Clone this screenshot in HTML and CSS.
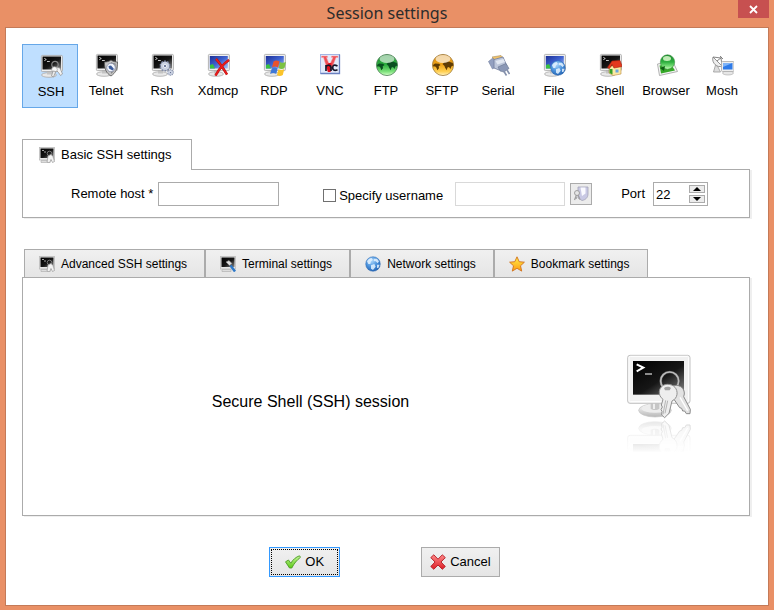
FILE: index.html
```html
<!DOCTYPE html>
<html lang="en">
<head>
    <meta charset="UTF-8">
    <meta name="viewport" content="width=device-width, initial-scale=1.0">
    <title>Session settings</title>
    <link rel="stylesheet" href="styles.css">
</head>
<body>
    <!-- shared icon parts -->
    <svg class="defs" aria-hidden="true">
        <defs>
            <linearGradient id="black" x1="0" y1="0" x2="1" y2="1">
                <stop offset="0" stop-color="#000"/><stop offset=".55" stop-color="#161616"/><stop offset="1" stop-color="#888"/>
            </linearGradient>
            <linearGradient id="blue" x1="0" y1="0" x2="1" y2="1">
                <stop offset="0" stop-color="#1c2f96"/><stop offset=".5" stop-color="#3f62d0"/><stop offset="1" stop-color="#a9c6f5"/>
            </linearGradient>
            <linearGradient id="metal" x1="0" y1="0" x2="0" y2="1">
                <stop offset="0" stop-color="#fff"/><stop offset="1" stop-color="#b8b8b8"/>
            </linearGradient>
            <linearGradient id="greenball" x1="0" y1="0" x2="0" y2="1">
                <stop offset="0" stop-color="#1c8a30"/><stop offset=".5" stop-color="#2fb040"/><stop offset=".8" stop-color="#7be07a"/><stop offset="1" stop-color="#d2ffc8"/>
            </linearGradient>
            <linearGradient id="goldball" x1="0" y1="0" x2="0" y2="1">
                <stop offset="0" stop-color="#d88a10"/><stop offset=".5" stop-color="#f0a418"/><stop offset=".8" stop-color="#ffcf50"/><stop offset="1" stop-color="#fff3c0"/>
            </linearGradient>
            <radialGradient id="blueball" cx=".4" cy=".3" r=".8">
                <stop offset="0" stop-color="#a8d4fa"/><stop offset=".5" stop-color="#4a92dc"/><stop offset="1" stop-color="#1c58a8"/>
            </radialGradient>
            <linearGradient id="check" x1="0" y1="0" x2="0" y2="1">
                <stop offset="0" stop-color="#c6f59a"/><stop offset="1" stop-color="#5ccb16"/>
            </linearGradient>
            <linearGradient id="red" x1="0" y1="0" x2="0" y2="1">
                <stop offset="0" stop-color="#ff8a8a"/><stop offset="1" stop-color="#dc1c24"/>
            </linearGradient>
            <linearGradient id="star" x1="0" y1="0" x2="0" y2="1">
                <stop offset="0" stop-color="#fff04a"/><stop offset="1" stop-color="#ff9a10"/>
            </linearGradient>
            <linearGradient id="fade" x1="0" y1="0" x2="0" y2="1">
                <stop offset=".5" stop-color="#000"/><stop offset="1" stop-color="#999"/>
            </linearGradient>
            <mask id="fademask" maskUnits="userSpaceOnUse" x="72" y="36" width="216" height="204">
                <rect x="72" y="36" width="216" height="204" fill="url(#fade)"/>
            </mask>
        </defs>
        <symbol id="monitor" viewBox="0 0 24 24">
            <ellipse cx="10" cy="21" rx="7.5" ry="2.3" fill="#e8e8e8" stroke="#a4a4a4" stroke-width=".7"/>
            <path d="M8 16h5v4.500H8z" fill="#c4c4c4"/>
            <rect x="2.400" y="1.400" width="21" height="16.200" rx="1" fill="#f0f0f0" stroke="#a2a2a2" stroke-width=".8"/>
        </symbol>
        <symbol id="term" viewBox="0 0 24 24">
            <use href="#monitor"/>
            <rect x="3.500" y="2.500" width="18.500" height="13" fill="url(#black)"/>
            <path d="M5.300 4.300l2 1.200-2 1.200M8 7.500h2.800" fill="none" stroke="#ddd" stroke-width=".9"/>
        </symbol>
        <symbol id="desk" viewBox="0 0 24 24">
            <use href="#monitor"/>
            <rect x="3.800" y="3" width="18" height="12.500" fill="url(#blue)"/>
            <path d="M4 12l3-1 2 4.500H4z" fill="#38c040"/>
        </symbol>
        <symbol id="ssh" viewBox="0 0 24 24">
            <use href="#term"/>
            <circle cx="16" cy="10.500" r="3.200" fill="none" stroke="#888" stroke-width="1.200"/>
            <path d="M17 13l4 1 2.500 6-2 1.500-2-3-2-2z" fill="#f4f4f4" stroke="#8c8c8c" stroke-width=".7"/>
            <circle cx="15.500" cy="15.500" r="2.800" fill="#fafafa" stroke="#999" stroke-width=".7"/>
            <path d="M14 17l-1.500 5 2 1 2.300-5.500z" fill="#ececec" stroke="#8c8c8c" stroke-width=".7"/>
        </symbol>
        <symbol id="ssh-small" viewBox="0 0 16 16">
            <path d="M2 13.500h9v2H2z" fill="#ddd" stroke="#aaa" stroke-width=".6"/>
            <rect x=".5" y=".5" width="15" height="12.500" fill="#e6e6e6" stroke="#bbb" stroke-width=".8"/>
            <rect x="1.500" y="1.500" width="13" height="9.500" fill="url(#black)"/>
            <path d="M3 3.500h2M5 5h2" stroke="#ccc" stroke-width=".8"/>
            <circle cx="10.500" cy="6.500" r="2.300" fill="none" stroke="#777"/>
            <path d="M9 9l3-1.500 2 2 1.500 5-2 1-1.500-3-1.500 3.500-2.500-1z" fill="#f2f2f2" stroke="#999" stroke-width=".7"/>
        </symbol>
        <symbol id="globe" viewBox="0 0 24 24">
            <circle cx="12" cy="12" r="11" fill="url(#blueball)" stroke="#2e69b4" stroke-width=".7"/>
            <path d="M3 8c2-4 5-5 7-5l2 3-3 2-1 4-3 0zM13 4l5 0 3 4-2 3-3-3-3 0zM9 14l5-2 2 4-4 5-3-2zM18 13l4 0-2 5-2 0z" fill="#e6f3ff" opacity=".85"/>
        </symbol>
        <symbol id="land" viewBox="0 0 24 24">
            <path d="M3 12l2-1.500 4 .3 1.500 1.200-1.800 1.200.3 2-1.700 2-.8-2.500-1.500-1.500-1.500.6zM12.500 11l2-1.700 4-.8 4.300 1.500.5 2.500-2 1-.8 2.500-1.500-2-1.500.5-.8 2.700-1.700-2.700-.5-1.500z"/>
        </symbol>
        <symbol id="gear" viewBox="0 0 24 24">
            <circle cx="12" cy="12" r="9" fill="#c2cadb" stroke="#7d88a4" stroke-width="4" stroke-dasharray="3.500 2.155"/>
            <circle cx="12" cy="12" r="8" fill="#c9d1e2"/>
            <circle cx="12" cy="12" r="3" fill="#3a4a78" stroke="#f5f7fb" stroke-width="2"/>
        </symbol>
    </svg>

    <header class="titlebar">
        <h1 class="title">Session settings</h1>
        <button class="close" type="button" aria-label="Close">
            <svg width="9" height="9" viewBox="0 0 9 9"><path d="M1 1l7 7M8 1L1 8" stroke="#fff" stroke-width="1.800"/></svg>
        </button>
    </header>

    <main class="client">
        <nav class="types">
            <button class="type selected" type="button">
                <svg class="icon" viewBox="0 0 24 24"><use href="#ssh"/></svg>
                SSH
            </button>
            <button class="type" type="button">
                <svg class="icon" viewBox="0 0 24 24">
                    <use href="#term"/>
                    <path d="M17 7c2 1.500 4 2 6.500 2 0 7-2 11-6.500 14-5-3-6.500-7-6.500-14 2.500 0 4.500-.5 6.500-2z" fill="#c4c4c4" stroke="#555" stroke-width=".8"/>
                    <path d="M17 9c1.500 1 3 1.300 4.800 1.400-.2 4.600-1.500 7.900-4.800 10.600z" fill="#888"/>
                    <circle cx="17" cy="14.500" r="4.300" fill="#f2f5fb" stroke="#8088a0" stroke-width=".8"/>
                    <path d="M14.500 13l2.500-.5 3 3.500-1.500 1.500-3.500-2z" fill="#3d5d9c"/>
                </svg>
                Telnet
            </button>
            <button class="type" type="button">
                <svg class="icon" viewBox="0 0 24 24">
                    <use href="#term"/>
                    <use href="#gear" x="9" y="7" width="12" height="12"/>
                    <use href="#gear" x="17" y="16" width="7" height="7"/>
                </svg>
                Rsh
            </button>
            <button class="type" type="button">
                <svg class="icon" viewBox="0 0 24 24">
                    <use href="#desk"/>
                    <path d="M10 6c4 4 7 9 11 15.500M23 7C17 11 13 16 9.500 22.500" fill="none" stroke="#a81414" stroke-width="2.500"/>
                    <path d="M10 6c4 4 7 9 11 15.500M23 7C17 11 13 16 9.500 22.500" fill="none" stroke="#ea1c1c" stroke-width="1.700"/>
                </svg>
                Xdmcp
            </button>
            <button class="type" type="button">
                <svg class="icon" viewBox="0 0 24 24">
                    <use href="#desk"/>
                    <path d="M11.500 8.500c2-1.500 3.800-1.300 6 0l-1.500 6c-2-1.300-4-1.300-6 0z" fill="#e8522c"/>
                    <path d="M18.200 9c2 1.200 3.800 1 5.800 0l-1.500 6c-2 1.200-4 1.200-5.800 0z" fill="#7cc242"/>
                    <path d="M9.700 15.500c2-1.300 4-1.300 6 0l-1.500 5.500c-2-1.300-4-1.300-6 0z" fill="#3f78d8"/>
                    <path d="M16.500 16c2 1.200 3.800 1.200 5.800 0l-1.500 6c-2 1.200-4 1.200-5.800 0z" fill="#fbc42a"/>
                </svg>
                RDP
            </button>
            <button class="type" type="button">
                <svg class="icon" viewBox="0 0 24 24">
                    <rect x="2.500" y="1.500" width="19" height="19" fill="#e2eafb" stroke="#a4b6e4"/>
                    <path d="M21.500 1.500v19h-19" fill="none" stroke="#6a80c0" stroke-width="1.300"/>
                    <path d="M3.500 3h6v1.500H8.500l3 7.500 3.500-7.500h-1.500V3h6.500v1.500h-2L12.500 19h-2.500L5.500 4.500h-2z" fill="#ee5058" stroke="#f8a4a8" stroke-width=".5"/>
                    <path d="M10.500 10l3 0-1 9h-2.500l-1.500-5z" fill="#e01020"/>
                    <path d="M8 18v-6M8 13.500c2-2 5-1.500 5 1V18M19.500 13c-3.500-1.800-4.800-.5-4.800 1.700s1.500 3.400 4.800 2" fill="none" stroke="#141428" stroke-width="1.700"/>
                </svg>
                VNC
            </button>
            <button class="type" type="button">
                <svg class="icon" viewBox="0 0 24 24">
                    <circle cx="13" cy="12" r="10.600" fill="url(#greenball)" stroke="#52805a" stroke-width=".8"/>
                    <use href="#land" fill="#0a4f20"/>
                    <ellipse cx="13" cy="6" rx="7.500" ry="4" fill="#fff" opacity=".6"/>
                </svg>
                FTP
            </button>
            <button class="type" type="button">
                <svg class="icon" viewBox="0 0 24 24">
                    <circle cx="13" cy="12" r="10.600" fill="url(#goldball)" stroke="#a07c40" stroke-width=".8"/>
                    <use href="#land" fill="#5f3c04"/>
                    <ellipse cx="13" cy="6" rx="7.500" ry="4" fill="#fff" opacity=".65"/>
                </svg>
                SFTP
            </button>
            <button class="type" type="button">
                <svg class="icon" viewBox="0 0 24 24">
                    <path d="M2.500 8.500l5-4 3 9-4 2.500z" fill="#93a0c0" stroke="#717e9e" stroke-width=".6"/>
                    <path d="M6 4l9-1.500 2 2-8 2.500z" fill="#f0c26a" stroke="#a98f60" stroke-width=".6"/>
                    <path d="M8 6.500l9-2.500 4 9-8 4-5-2z" fill="#bdc6da" stroke="#717e9e" stroke-width=".8"/>
                    <path d="M9.500 8l8-2 1.500 3-7.500 2.500z" fill="#e2e8f2"/>
                    <path d="M12 14l8-3.500 3 5-5 3.500-4-1z" fill="#8b98b6" stroke="#66738f" stroke-width=".6"/>
                    <path d="M18 18.500l2.500 4M21 17l2.500 4" stroke="#8591ac" stroke-width="1.600"/>
                </svg>
                Serial
            </button>
            <button class="type" type="button">
                <svg class="icon" viewBox="0 0 24 24">
                    <use href="#desk"/>
                    <use href="#globe" x="8" y="7" width="16" height="16"/>
                </svg>
                File
            </button>
            <button class="type" type="button">
                <svg class="icon" viewBox="0 0 24 24">
                    <use href="#term"/>
                    <path d="M11 14.500l4.500-2.500 7.500 1v8l-8 1.500-4-2.500z" fill="#fce9a4" stroke="#b98a3c" stroke-width=".6"/>
                    <path d="M9.500 14.500L14 8l8-.5 2.300 6-8.300 1.500-2-3.500-2.500 4z" fill="#e4381e" stroke="#a4200e" stroke-width=".6"/>
                    <path d="M11.500 16h3v5.500l-3-1.500z" fill="#35a128"/>
                    <path d="M17.500 16.500h3v3h-3z" fill="#6aa6e0"/>
                </svg>
                Shell
            </button>
            <button class="type" type="button">
                <svg class="icon" viewBox="0 0 24 24">
                    <path d="M3.500 11l15-3 5 10.500-18 4z" fill="#f4f4f4" stroke="#a0a0a0" stroke-width=".8"/>
                    <path d="M5.500 12.500l11-2 4.500 7-14 3z" fill="#36a828"/>
                    <circle cx="13.500" cy="9" r="7.200" fill="url(#greenball)" stroke="#3c9040" stroke-width=".6"/>
                    <ellipse cx="13" cy="5.500" rx="4" ry="2.500" fill="#e6ffd6" opacity=".8"/>
                    <path d="M6 15l5-2-1 5z" fill="#0e5d16"/>
                </svg>
                Browser
            </button>
            <button class="type" type="button">
                <svg class="icon" viewBox="0 0 24 24">
                    <path d="M3 4l9 9c-4 2.500-11-3-9-9z" fill="#eee" stroke="#888" stroke-width=".9"/>
                    <path d="M5.500 12l-2 7h7l-2.500-5z" fill="#ddd" stroke="#999" stroke-width=".8"/>
                    <path d="M7 8l5-4M10 3l3 3M3 4l8 1M12 13l-1-8" fill="none" stroke="#777" stroke-width=".9"/>
                    <ellipse cx="18" cy="20" rx="5.500" ry="2" fill="#e6e6e6" stroke="#aaa" stroke-width=".6"/>
                    <rect x="11.500" y="8.500" width="12.500" height="10" rx="1" fill="#eee" stroke="#aaa" stroke-width=".8"/>
                    <rect x="13" y="10" width="9.500" height="6.500" fill="#2f7be8"/>
                    <path d="M13 10h9.500l-9.500 4z" fill="#7fb4f8"/>
                </svg>
                Mosh
            </button>
        </nav>

        <section class="basic">
            <div class="tabs" role="tablist">
                <button class="tab active" type="button" role="tab" aria-selected="true">
                    <svg class="small-icon" viewBox="0 0 16 16"><use href="#ssh-small"/></svg>
                    Basic SSH settings
                </button>
            </div>
            <form class="panel fields">
                <label class="host-label" for="host">Remote host *</label>
                <input class="box host" type="text" id="host">
                <input class="check" type="checkbox" id="specify">
                <label class="specify-label" for="specify">Specify username</label>
                <input class="box user" type="text" aria-label="Username" disabled>
                <button class="pick" type="button" aria-label="Manage users">
                    <svg class="small-icon" viewBox="0 0 16 16">
                        <path d="M5 1h10v7c0 4-3 6-6 6.500L5 12z" fill="#c9c9e4" stroke="#a4a4b8" stroke-width=".8"/>
                        <path d="M7.500 1.500h5v6L9 10z" fill="#fafaff"/>
                        <circle cx="4" cy="7" r="2.500" fill="#e6e6e6" stroke="#a0a0a0"/>
                        <path d="M3.500 9L1.500 14M5 9l2 4.500M2.500 12h1.500" fill="none" stroke="#a0a0a0" stroke-width="1.300"/>
                    </svg>
                </button>
                <label class="port-label" for="port">Port</label>
                <div class="box spinner">
                    <input class="port" type="number" id="port" value="22">
                    <div class="arrows">
                        <button class="arrow" type="button" aria-label="Increase port"><svg width="8" height="4" viewBox="0 0 8 4"><path d="M0 4l4-4 4 4z"/></svg></button>
                        <button class="arrow" type="button" aria-label="Decrease port"><svg width="8" height="4" viewBox="0 0 8 4"><path d="M0 0l4 4 4-4z"/></svg></button>
                    </div>
                </div>
            </form>
        </section>

        <section class="advanced">
            <div class="tabs inset" role="tablist">
                <button class="tab" type="button" role="tab">
                    <svg class="small-icon" viewBox="0 0 16 16"><use href="#ssh-small"/></svg>
                    Advanced SSH settings
                </button>
                <button class="tab" type="button" role="tab">
                    <svg class="small-icon" viewBox="0 0 16 16">
                        <path d="M2 13.500h9v2H2z" fill="#ddd" stroke="#aaa" stroke-width=".6"/>
                        <rect x=".5" y=".5" width="15" height="12.500" fill="#e6e6e6" stroke="#bbb" stroke-width=".8"/>
                        <rect x="1.500" y="1.500" width="13" height="9.500" fill="url(#black)"/>
                        <path d="M6 6l3-1.500 3 3-2.500 2z" fill="#ddd" stroke="#888" stroke-width=".6"/>
                        <path d="M10.500 9.500l4.500 6" stroke="#2d78c8" stroke-width="2.500"/>
                    </svg>
                    Terminal settings
                </button>
                <button class="tab" type="button" role="tab">
                    <svg class="small-icon" viewBox="0 0 24 24"><use href="#globe"/></svg>
                    Network settings
                </button>
                <button class="tab" type="button" role="tab">
                    <svg class="small-icon" viewBox="0 0 16 16"><path d="M8 .8l2.200 4.900 5.200.5-3.900 3.600 1.200 5.300L8 12.300l-4.700 2.800 1.200-5.300L.6 6.200l5.200-.5z" fill="url(#star)" stroke="#d0701c" stroke-width=".9"/></svg>
                    Bookmark settings
                </button>
            </div>
            <div class="panel summary">
                <p class="summary-text">Secure Shell (SSH) session</p>
                <svg class="picture" viewBox="72 36 216 300">
                    <g id="ssh-large">
                        <ellipse cx="165" cy="211" rx="49" ry="20" fill="url(#metal)" stroke="#c4c4c4" stroke-width="2"/>
                        <ellipse cx="165" cy="206" rx="40" ry="12" fill="#ededed"/>
                        <path d="M152 182h26v24c-6 5-20 5-26 0z" fill="#c6c6c6"/>
                        <path d="M159 182h6v25h-6z" fill="#eee"/>
                        <rect x="83" y="46" width="187" height="144" rx="7" fill="#f1f1f1" stroke="#c2c2c2" stroke-width="3"/>
                        <rect x="87" y="49" width="179" height="136" rx="4" fill="none" stroke="#fff" stroke-width="3"/>
                        <rect x="99" y="63" width="153" height="101" fill="url(#black)"/>
                        <path d="M110 73l20 10-20 11" fill="none" stroke="#fff" stroke-width="6"/>
                        <path d="M135 102h21" stroke="#ccc" stroke-width="4"/>
                        <circle cx="209" cy="123" r="27" fill="none" stroke="#555" stroke-width="8"/>
                        <circle cx="209" cy="123" r="27" fill="none" stroke="#bbb" stroke-width="5"/>
                        <path d="M222 137c18-4 32 8 31 25l-2 8 20 38-1 13-11 0-5-8-6 0-3-8-6-2-17-25-13-6c-8-14-3-30 13-35z" fill="#e2e2e2" stroke="#8a8a8a" stroke-width="3"/>
                        <path d="M240 172l23 40" stroke="#fff" stroke-width="4"/>
                        <path d="M203 133c19 0 30 14 28 30-1 9-7 16-15 20l-9 37-13 13-9-8 1-11-3-5 4-8-3-6 5-17c-8-6-12-14-11-24 2-13 12-21 25-21z" fill="#eee" stroke="#909090" stroke-width="3"/>
                        <path d="M197 181l-8 42M203 182l-8 38" stroke="#b5b5b5" stroke-width="3"/>
                        <path d="M192 144c6-5 16-5 21 0l-4 7-14 0z" fill="#a0a0a0"/>
                    </g>
                    <g transform="matrix(1 0 0 -1 0 476)"><g mask="url(#fademask)" opacity=".6"><use href="#ssh-large"/></g></g>
                </svg>
            </div>
        </section>

        <footer class="actions">
            <button class="action ok" type="button">
                <svg class="small-icon" viewBox="0 0 16 16"><path d="M.5 7.800L3.500 6l2.300 3.200C8 5.500 11 3 14.500 1.800l1 1.500C12 6 9 9.500 6.800 14H4.500z" fill="url(#check)" stroke="#4b9a24" stroke-width=".9"/></svg>
                OK
            </button>
            <button class="action" type="button">
                <svg class="small-icon" viewBox="0 0 16 16"><path d="M3.800.8L8 5.200 12.300.8l3 2.800L11 8l4.300 4.500-3 2.800L8 11l-4.200 4.300-3-2.800L5 8 .8 3.600z" fill="url(#red)" stroke="#b01820" stroke-width=".9"/></svg>
                Cancel
            </button>
        </footer>
    </main>
</body>
</html>
```

FILE: styles.css
```css
* {
    box-sizing: border-box;
}
body {
    margin: 0;
    min-height: 100vh;
    display: flex;
    flex-direction: column;
    padding: 0 5px 4px;
    background: #e99066;
    color: #000;
    font-family: "Liberation Sans", Arial, sans-serif;
    font-size: 13px;
    line-height: 16px;
}
button, input {
    font: inherit;
    color: inherit;
    margin: 0;
    padding: 0;
}
svg {
    display: block;
    flex: none;
}
.defs {
    position: absolute;
    width: 0;
    height: 0;
}

/* title bar */
.titlebar {
    display: grid;
    grid-template-columns: 1fr auto 1fr;
    height: 27px;
}
.title {
    grid-column: 2;
    margin: 0;
    color: #2c2c2c;
    font-family: "Noto Sans", sans-serif;
    font-size: 16px;
    font-weight: normal;
    line-height: 27px;
}
.close {
    justify-self: end;
    display: flex;
    align-items: center;
    justify-content: center;
    width: 31px;
    height: 18px;
    border: none;
    background: #c75050;
}
.client {
    flex: 1;
    display: flex;
    flex-direction: column;
    padding: 16px 18px 28px 16px;
    border: 1px solid #c47a58;
    background: #fff;
}

/* session types */
.types {
    display: grid;
    grid-template-columns: repeat(13, minmax(0, 1fr));
}
.type {
    display: flex;
    flex-direction: column;
    align-items: center;
    gap: 6px;
    height: 64px;
    padding-top: 8px;
    border: 1px solid transparent;
    background: none;
}
.type.selected {
    padding: 9px 0 0 2px;
    border-color: #66a7e8;
    background: #bfdfff;
}
.icon {
    width: 24px;
    height: 24px;
}
.small-icon {
    width: 16px;
    height: 16px;
}

/* tabs and panels */
.basic {
    margin-top: 31px;
}
.tabs {
    display: flex;
}
.tabs.inset {
    padding-left: 2px;
    font-size: 12px;
}
.tab {
    display: flex;
    align-items: center;
    gap: 6px;
    height: 28px;
    padding: 0 17px 0 14px;
    border: 1px solid #ababab;
    border-bottom: none;
    background: linear-gradient(#f0f0f0, #e5e5e5);
}
.tab.active {
    position: relative;
    height: 31px;
    margin-bottom: -1px;
    padding: 0 19px 0 16px;
    background: #fff;
}
.panel {
    border: 1px solid #ababab;
    box-shadow: 2px 1px 0 #efefef;
}
.fields {
    display: flex;
    align-items: flex-start;
    height: 49px;
    padding: 12px 41px 0 48px;
}
.fields label {
    white-space: nowrap;
}
.box {
    height: 24px;
    border: 1px solid #ababab;
    background: #fff;
}
.host-label, .port-label {
    padding-top: 4px;
}
.host {
    flex: 121 1 0;
    min-width: 0;
    margin-left: 5px;
}
.check {
    appearance: none;
    width: 13px;
    height: 13px;
    margin: 7px 3px 0 44px;
    border: 1px solid #707070;
    background: #fff;
}
.check:checked {
    background: #707070;
}
.specify-label {
    padding-top: 6px;
}
.user {
    flex: 110 1 0;
    min-width: 0;
    margin-left: 12px;
    border-color: #d9d9d9;
}
.pick {
    display: flex;
    align-items: center;
    justify-content: center;
    width: 22px;
    height: 22px;
    margin: 1px 29px 0 5px;
    border: 1px solid #ababab;
    background: #ececec;
}
.spinner {
    display: flex;
    width: 55px;
    margin-left: 8px;
    padding: 2px;
}
.port {
    flex: 1;
    min-width: 0;
    height: 18px;
    border: none;
    appearance: textfield;
}
.port::-webkit-inner-spin-button {
    appearance: none;
}
.arrows {
    display: flex;
    flex-direction: column;
    gap: 2px;
}
.arrow {
    display: flex;
    align-items: center;
    justify-content: center;
    width: 16px;
    height: 8px;
    border: 1px solid #ababab;
    background: #ececec;
}

.advanced {
    flex: 1;
    display: flex;
    flex-direction: column;
    margin-top: 31px;
}
.summary {
    flex: 1;
    display: flex;
    align-items: center;
    padding: 10px 53px 0 0;
}
.summary-text {
    flex: 1;
    margin: 0;
    font-size: 16px;
    line-height: 20px;
    text-align: center;
}
.picture {
    width: 72px;
    height: 100px;
    margin-left: 26px;
}

/* dialog buttons */
.actions {
    display: flex;
    justify-content: center;
    gap: 81px;
    margin-top: 31px;
    padding-right: 3px;
}
.action {
    display: flex;
    align-items: center;
    justify-content: center;
    gap: 4px;
    height: 30px;
    padding: 0 8px;
    border: 1px solid #ababab;
    background: linear-gradient(#f0f0f0, #e5e5e5);
}
.ok {
    padding: 0 15px;
    border-color: #3399ff;
    outline: 1px dotted #000;
    outline-offset: -3px;
}
```
